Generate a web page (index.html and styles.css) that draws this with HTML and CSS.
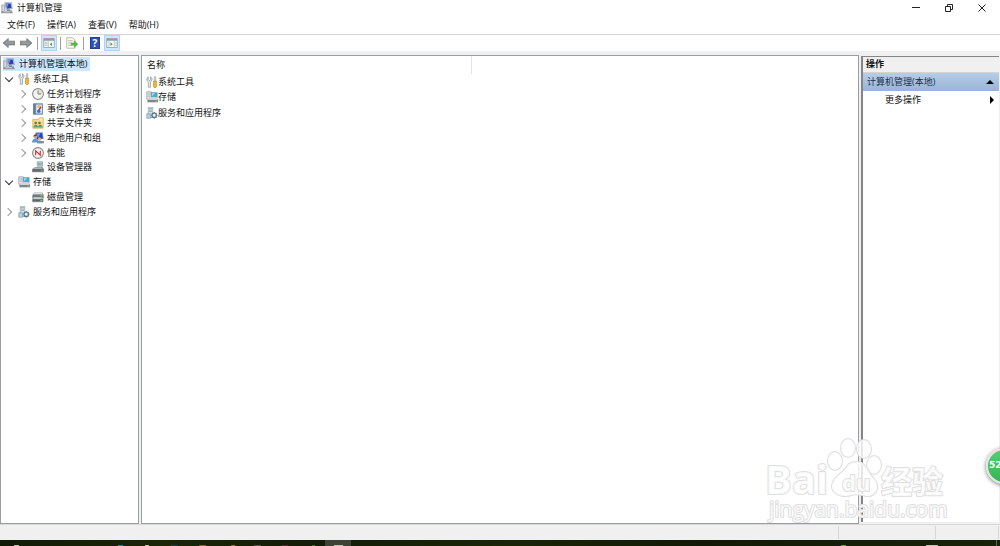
FILE: index.html
```
<!DOCTYPE html>
<html lang="zh-CN">
<head>
  <meta charset="UTF-8">
  <meta name="viewport" content="width=device-width, initial-scale=1.0">
  <title>计算机管理</title>
  <link rel="stylesheet" href="styles.css">
</head>
<body>
  <!-- 图标 -->
  <svg class="sprite" aria-hidden="true">
    <symbol id="computer" viewBox="0 0 16 16">
      <path d="M1 4h4v9H1z" fill="#d5d9dc" stroke="#7b858c" stroke-width=".8"/>
      <path d="M5 1h9l1 8-8 1z" fill="#e4e6ee" stroke="#77809a" stroke-width=".8"/>
      <path d="M6 2h7l1 6-6 1z" fill="#2743b8"/>
      <path d="M6 2l4 0-2 6z" fill="#7792e8"/>
      <path d="M8 10h4v2H8z" fill="#7d858c"/>
      <path d="M1 12l13-1 2 4H0z" fill="#8b959b"/>
      <path d="M3 13h9" stroke="#dfe4e6"/>
    </symbol>
    <symbol id="tools" viewBox="0 0 16 16">
      <path d="M3 1v4l1 1h1l1-1V1c2 1 3 4 .8 6L6 8v7H3V8C0 6 1 2 3 1z" fill="#e3e6e8" stroke="#8a9196" stroke-width=".9"/>
      <path d="M11 1h2v7h-2z" fill="#c9ced1" stroke="#8a9196" stroke-width=".6"/>
      <path d="M10 7h4v7l-1 1.500h-2L10 14z" fill="#edb92e" stroke="#b17d16" stroke-width=".7"/>
    </symbol>
    <symbol id="clock" viewBox="0 0 16 16">
      <circle cx="8" cy="8" r="7.200" fill="#f4f5f3" stroke="#868a8d" stroke-width="1.400"/>
      <path d="M8 8V2.500A5.500 5.500 0 0 1 13.500 8z" fill="#f3dfa9"/>
      <path d="M8 3v5h4" fill="none" stroke="#65727e" stroke-width="1.200"/>
      <circle cx="8" cy="8" r="5.500" fill="none" stroke="#d4d7d8" stroke-width=".6"/>
    </symbol>
    <symbol id="event" viewBox="0 0 16 16">
      <path d="M2 1h12v14H2z" fill="#a7c2dc" stroke="#58789b"/>
      <path d="M2 1h3v14H2z" fill="#627c98"/>
      <path d="M6 3h7v10H6z" fill="#e9eef4"/>
      <path d="M9 2l2.500 4h-5z" fill="#e6ba2f"/>
      <path d="M12 5l-3 5" stroke="#cf3434" stroke-width="2"/>
      <circle cx="9" cy="11" r="2.300" fill="#3c6dc5"/>
    </symbol>
    <symbol id="share" viewBox="0 0 16 16">
      <path d="M1 3h8l1-2h5v14H1z" fill="#f5d981" stroke="#c5a23e" stroke-width=".8"/>
      <path d="M10 2h4v3h-4z" fill="#fbf0c4"/>
      <circle cx="5" cy="8" r="1.700" fill="#6f7140"/>
      <circle cx="10" cy="8" r="1.700" fill="#6f7140"/>
      <path d="M2 14c0-5 6-5 6 0 0-5 6-5 6 0z" fill="#4f9e78"/>
    </symbol>
    <symbol id="users" viewBox="0 0 16 16">
      <path d="M5 1h9l1 8-9 1z" fill="#2945b8" stroke="#8e97bd"/>
      <path d="M6 2h5L8 8z" fill="#7994ed"/>
      <path d="M8 12h8v3H7z" fill="#8c9499"/>
      <circle cx="4.500" cy="6" r="2.500" fill="#d7a36c"/>
      <path d="M2 6c0-4 5-4 5-1z" fill="#6a4e2d"/>
      <path d="M0 14c0-7 9-7 9 0z" fill="#6297cb"/>
      <circle cx="10" cy="9" r="2" fill="#dfb178"/>
      <path d="M7 15c0-5 7-5 7 0z" fill="#7a8b9a"/>
    </symbol>
    <symbol id="performance" viewBox="0 0 16 16">
      <circle cx="8" cy="8" r="7.200" fill="#fff" stroke="#85888a" stroke-width="1.500"/>
      <circle cx="8" cy="8" r="5.500" fill="none" stroke="#d1a8a8" stroke-width=".6"/>
      <path d="M5 11V5l6 6V5" fill="none" stroke="#d22626" stroke-width="1.500"/>
    </symbol>
    <symbol id="device" viewBox="0 0 16 16">
      <path d="M7 1h7v6H7z" fill="#e3e8ea" stroke="#88949a"/>
      <path d="M8 2h5v4H8z" fill="#83aebd"/>
      <path d="M4 8h10l2 3v4H0v-4z" fill="#879197"/>
      <path d="M1 11h14v3H1z" fill="#5e686e"/>
      <path d="M4 9h9v1H3z" fill="#d8dddf"/>
      <path d="M12 12h2v1h-2z" fill="#83e35f"/>
    </symbol>
    <symbol id="storage" viewBox="0 0 16 16">
      <path d="M1 1h6v10H1z" fill="#e9eeef" stroke="#7e8a90" stroke-width=".8"/>
      <path d="M2 3h4M2 5h4M2 7h4" stroke="#8f9ba0" stroke-width=".8"/>
      <path d="M7 2h8v7H7z" fill="#45acd0" stroke="#79878d" stroke-width=".6"/>
      <path d="M8 3h4L8 7z" fill="#a5dced"/>
      <path d="M4 8h10l2 3v4H2v-4z" fill="#d0d6d8"/>
      <path d="M2 11h14v4H2z" fill="#7b868b"/>
      <path d="M3 11h12v1H3z" fill="#e3e7e8"/>
      <path d="M12 13h3v1h-3z" fill="#72e152"/>
    </symbol>
    <symbol id="disk" viewBox="0 0 16 16">
      <path d="M3 2h11l2 4v4H0V6z" fill="#aab2b5"/>
      <path d="M1 5h14v4H1z" fill="#70797e"/>
      <path d="M3 3h10v1H3z" fill="#eef1f1"/>
      <path d="M2 8h11l2 3v4H0v-4z" fill="#a7afb2"/>
      <path d="M1 11h14v3H1z" fill="#5b656a"/>
      <path d="M3 9h9v1H3z" fill="#edf0f0"/>
      <path d="M11 12h3v1h-3zM11 6h3v1h-3z" fill="#94dc81"/>
    </symbol>
    <symbol id="services" viewBox="0 0 16 16">
      <path d="M3 0h6v14H3z" fill="#d9e2e8" stroke="#7c929e" stroke-width=".8"/>
      <path d="M4 2h4M4 4h4M4 6h4" stroke="#89a3b3"/>
      <path d="M1 9h5v6H1z" fill="#b5cfdd" stroke="#7396a9" stroke-width=".8"/>
      <path d="M11 6.500v9M6.500 11h9M8 8l6 6M14 8l-6 6" stroke="#6d899a" stroke-width="1.600"/>
      <circle cx="11" cy="11" r="3" fill="#c2d5df" stroke="#55758a" stroke-width="1.500"/>
      <circle cx="11" cy="11" r="1.300" fill="#fff"/>
    </symbol>
    <symbol id="back" viewBox="0 0 16 16">
      <path d="M0 8l7-6v3.500h9v5H7V14z" fill="#8d9092" stroke="#77797b"/>
      <path d="M4 8h10" stroke="#a9abac"/>
    </symbol>
    <symbol id="forward" viewBox="0 0 16 16">
      <path d="M16 8L9 2v3.500H0v5h9V14z" fill="#8d9092" stroke="#77797b"/>
      <path d="M2 8h10" stroke="#a9abac"/>
    </symbol>
    <symbol id="tree-pane" viewBox="0 0 16 16">
      <path d="M1 2h14v12H1z" fill="#f8fafb" stroke="#8a989f"/>
      <path d="M1 2h14v3H1z" fill="#909da5"/>
      <path d="M7 5v9M2 7h4M2 9h4M2 11h4" stroke="#a8b3b9"/>
      <path d="M12 7v5L9 9.500z" fill="#3aac3a"/>
    </symbol>
    <symbol id="action-pane" viewBox="0 0 16 16">
      <path d="M1 2h14v12H1z" fill="#f8fafb" stroke="#8a989f"/>
      <path d="M1 2h14v3H1z" fill="#909da5"/>
      <path d="M4 5v9M11 5v9M12 8h3M12 11h3" stroke="#a8b3b9"/>
      <path d="M6 7v5l3-2.500z" fill="#3aac3a"/>
    </symbol>
    <symbol id="export" viewBox="0 0 16 16">
      <path d="M1 1h8l3 3v11H1z" fill="#fdfbeb" stroke="#b1aa8d"/>
      <path d="M3 5h6M3 8h5M3 11h5" stroke="#9b9c91"/>
      <path d="M7 8h4V5l5 4.500-5 4.500v-3H7z" fill="#55bd47" stroke="#459d3c" stroke-width=".5"/>
    </symbol>
  </svg>

  <div class="window">
    <header class="titlebar">
      <svg class="icon"><use href="#computer"/></svg>
      <h1>计算机管理</h1>
      <div class="window-buttons">
        <button aria-label="最小化"><svg viewBox="0 0 8 8"><path d="M0 3.500h8"/></svg></button>
        <button aria-label="还原"><svg viewBox="0 0 8 8"><path d="M.5 2.500h5v5h-5zM2.500 2.500v-2h5v5h-2"/></svg></button>
        <button aria-label="关闭"><svg viewBox="0 0 8 8"><path d="M.5.5l7 7M7.500.5l-7 7"/></svg></button>
      </div>
    </header>

    <nav class="menubar">
      <button>文件(F)</button>
      <button>操作(A)</button>
      <button>查看(V)</button>
      <button>帮助(H)</button>
    </nav>

    <div class="toolbar">
      <button aria-label="后退"><svg class="icon"><use href="#back"/></svg></button>
      <button aria-label="前进"><svg class="icon"><use href="#forward"/></svg></button>
      <span class="separator"></span>
      <button class="active" aria-label="显示控制台树"><svg class="icon"><use href="#tree-pane"/></svg></button>
      <span class="separator"></span>
      <button aria-label="导出列表"><svg class="icon"><use href="#export"/></svg></button>
      <span class="separator"></span>
      <button aria-label="帮助"><span class="help">?</span></button>
      <button class="active" aria-label="显示操作窗格"><svg class="icon"><use href="#action-pane"/></svg></button>
    </div>

    <main class="workspace">
      <nav class="tree">
        <ul>
          <li><span class="selected"><svg class="icon"><use href="#computer"/></svg>计算机管理(本地)</span></li>
          <li class="group"><i class="arrow open"></i><svg class="icon"><use href="#tools"/></svg>系统工具</li>
          <li class="leaf"><i class="arrow"></i><svg class="icon"><use href="#clock"/></svg>任务计划程序</li>
          <li class="leaf"><i class="arrow"></i><svg class="icon"><use href="#event"/></svg>事件查看器</li>
          <li class="leaf"><i class="arrow"></i><svg class="icon"><use href="#share"/></svg>共享文件夹</li>
          <li class="leaf"><i class="arrow"></i><svg class="icon"><use href="#users"/></svg>本地用户和组</li>
          <li class="leaf"><i class="arrow"></i><svg class="icon"><use href="#performance"/></svg>性能</li>
          <li class="leaf"><i class="arrow none"></i><svg class="icon"><use href="#device"/></svg>设备管理器</li>
          <li class="group"><i class="arrow open"></i><svg class="icon"><use href="#storage"/></svg>存储</li>
          <li class="leaf"><i class="arrow none"></i><svg class="icon"><use href="#disk"/></svg>磁盘管理</li>
          <li class="group"><i class="arrow"></i><svg class="icon"><use href="#services"/></svg>服务和应用程序</li>
        </ul>
      </nav>

      <section class="content">
        <div class="column-head">名称</div>
        <ul class="items">
          <li><svg class="icon"><use href="#tools"/></svg>系统工具</li>
          <li><svg class="icon"><use href="#storage"/></svg>存储</li>
          <li><svg class="icon"><use href="#services"/></svg>服务和应用程序</li>
        </ul>
      </section>

      <aside class="actions">
        <h2>操作</h2>
        <button class="action-title">计算机管理(本地)<i class="up"></i></button>
        <button class="action-more">更多操作<i class="right"></i></button>
      </aside>
    </main>

    <footer class="statusbar">
      <span></span>
      <span class="wide"></span>
      <span class="mid"></span>
    </footer>

    <!-- 任务栏顶部 -->
    <div class="taskbar">
      <svg width="360" height="6">
        <path d="M325 0h26v6h-26z" fill="#3c4335"/>
        <path d="M14 5h5v1h-5zM145 5h4v1h-4zM334 5h9v1h-9z" fill="#bfc4b6"/>
        <path d="M118 5h5v1h-5z" fill="#2681bd"/>
        <path d="M171 5h7v1h-7z" fill="#154450"/>
        <path d="M199 5h7v1h-7z" fill="#bd4a1c"/>
        <path d="M231 5h4v1h-4z" fill="#967245"/>
        <path d="M254 5h7v1h-7z" fill="#55594f"/>
        <path d="M282 5h6v1h-6z" fill="#592936"/>
        <path d="M312 5h3v1h-3z" fill="#3a7224"/>
      </svg>
      <svg width="160" height="6">
        <path d="M1 5h5v1H1z" fill="#7c9f20"/>
        <path d="M86 5h12v1H86z" fill="#bfc4b6"/>
        <path d="M156 0h1v6h-1z" fill="#5d6258"/>
      </svg>
    </div>
  </div>

  <svg class="watermark" viewBox="0 0 190 90">
    <text class="brand" x="5" y="59">Bai</text>
    <ellipse cx="75" cy="26" rx="7" ry="9"/>
    <ellipse cx="88" cy="13" rx="7" ry="9"/>
    <ellipse cx="104" cy="14" rx="7" ry="9"/>
    <ellipse cx="114" cy="30" rx="7" ry="9"/>
    <path d="M97 27c9 0 11 11 17 17 8 10 0 18-8 17-6-2-13-2-18 0-10 1-19-5-15-14 4-8 12-10 15-17q3-3 9-3z"/>
    <text class="du" x="82" y="56">du</text>
    <text class="cn" x="121" y="58">经验</text>
    <text class="site" x="9" y="82">jingyan.baidu.com</text>
  </svg>
  <div class="badge">52</div>
</body>
</html>
```
FILE: styles.css
```
* {
  box-sizing: border-box;
}
body {
  margin: 0;
  position: relative;
  overflow: hidden;
  font-family: "Open Sans", "Noto Sans CJK SC", sans-serif;
  font-size: 9px;
  line-height: 14px;
  color: #111;
  background: #fff;
}
button {
  font: inherit;
  color: inherit;
  border: 0;
  padding: 0;
  background: none;
}
ul {
  list-style: none;
  margin: 0;
  padding: 0;
}
.sprite {
  display: none;
}
.icon {
  width: 12px;
  height: 12px;
  flex: none;
}
.window {
  height: 100vh;
  display: flex;
  flex-direction: column;
}

/* title, menu, toolbar */
.titlebar {
  height: 16px;
  display: flex;
  align-items: center;
  gap: 4px;
  padding-left: 1px;
}
.titlebar h1 {
  margin: 0;
  font-size: 9px;
  font-weight: normal;
}
.window-buttons {
  margin-left: auto;
  display: flex;
  padding-right: 2px;
}
.window-buttons button {
  width: 33px;
  height: 14px;
  display: flex;
  align-items: center;
  justify-content: center;
}
.window-buttons svg {
  width: 8px;
  height: 8px;
  fill: none;
  stroke: #222;
}
.menubar {
  height: 19px;
  display: flex;
  align-items: center;
  gap: 12px;
  padding-left: 7px;
  border-bottom: 1px solid #d7d7d7;
}
.toolbar {
  height: 16px;
  display: flex;
  align-items: center;
  gap: 1px;
  padding-left: 1px;
}
.toolbar button {
  width: 16px;
  height: 16px;
  display: flex;
  align-items: center;
  justify-content: center;
}
.toolbar .active {
  background: #cce8ff;
  border: 1px solid #a9d7f8;
}
.separator {
  width: 1px;
  height: 13px;
  margin: 0 2px;
  background: #a0a0a0;
}
.help {
  width: 10px;
  height: 12px;
  line-height: 10px;
  font-size: 10px;
  font-weight: bold;
  color: #fff;
  background: #2d51b5;
  border: 1px solid #203f91;
}

/* panes */
.workspace {
  flex: 1;
  min-height: 0;
  display: flex;
  gap: 2px;
  padding: 4px 1px 0 0;
  background: #f0f0f0;
}
.tree,
.content {
  background: #fff;
  border: 1px solid #9a9da3;
}
.tree {
  width: 139px;
  padding: 1px 0 0 2px;
}
.tree ul {
  height: 162px;
  display: grid;
  grid-template-rows: repeat(11, 1fr);
}
.tree li {
  display: flex;
  align-items: center;
  gap: 3px;
  min-height: 0;
}
.tree .group {
  padding-left: 2px;
}
.tree .leaf {
  padding-left: 16px;
}
.selected {
  display: flex;
  align-items: center;
  gap: 4px;
  height: 14px;
  padding-right: 3px;
  background: #cce8ff;
}
.arrow {
  width: 8px;
  height: 8px;
  display: flex;
  align-items: center;
  justify-content: center;
  margin-right: 2px;
}
.arrow::before {
  content: "";
  width: 5px;
  height: 5px;
  margin-left: -3px;
  border: solid #999;
  border-width: 1px 1px 0 0;
  transform: rotate(45deg);
}
.arrow.open::before {
  margin: -3px 0 0;
  border-color: #333;
  transform: rotate(135deg);
}
.arrow.none::before {
  display: none;
}
.content {
  flex: 1;
}
.column-head {
  width: 330px;
  height: 18px;
  padding: 2px 5px;
  border-right: 1px solid #e3e3e3;
}
.items {
  height: 47px;
  display: grid;
  grid-template-rows: repeat(3, 1fr);
  padding-left: 4px;
}
.items li {
  display: flex;
  align-items: center;
  min-height: 0;
}
.actions {
  width: 138px;
  display: flex;
  flex-direction: column;
  margin: 1px 0 2px;
  background: #fff;
  border-top: 1px solid #858585;
  border-left: 2px solid #858585;
}
.actions h2 {
  margin: 0;
  height: 16px;
  padding-left: 3px;
  font-size: 9px;
  background: #f0f0f0;
  border-bottom: 1px solid #d4d4d4;
}
.actions button {
  height: 18px;
  display: flex;
  align-items: center;
  justify-content: space-between;
  padding: 0 5px 0 4px;
}
.actions .action-title {
  background: linear-gradient(#b6cde7, #98b4d6);
  color: #1c2f49;
}
.actions .action-more {
  padding-left: 22px;
}
.up {
  border: 4px solid transparent;
  border-top: 0;
  border-bottom-color: #000;
}
.right {
  border: 4px solid transparent;
  border-right: 0;
  border-left-color: #000;
}

.statusbar {
  height: 16px;
  display: flex;
  background: #f0f0f0;
  border-top: 1px solid #d8d8d8;
  padding: 1px 1px 1px 0;
}
.statusbar span {
  flex: 1;
  border-right: 1px solid #d5d5d5;
}
.statusbar .wide {
  flex: none;
  width: 97px;
}
.statusbar .mid {
  flex: none;
  width: 63px;
}
.taskbar {
  height: 6px;
  display: flex;
  justify-content: space-between;
  background: linear-gradient(90deg, #101906, #1b2604 16%, #111b08 32%, #1a2505 50%, #111906 70%, #182207);
}

/* overlays */
.watermark {
  position: absolute;
  right: 50px;
  bottom: 21px;
  width: 190px;
  height: 90px;
  fill: #fff;
  fill-opacity: 0.8;
  stroke: #e0e0e0;
  stroke-width: 2px;
  stroke-linejoin: round;
  paint-order: stroke;
  pointer-events: none;
}
.brand {
  font: bold 40px "Open Sans", sans-serif;
}
.du {
  font: bold 22px "Open Sans", sans-serif;
}
.cn {
  font: bold 31px "Noto Sans CJK SC", sans-serif;
}
.site {
  font: 21px "Open Sans", sans-serif;
}
.badge {
  position: absolute;
  right: -22px;
  top: 448px;
  width: 36px;
  height: 36px;
  padding-left: 1px;
  font: bold 9px/30px "DejaVu Sans", sans-serif;
  color: #fff;
  background: linear-gradient(#55cf72, #35b553);
  border: 2px solid #e4e4e4;
  border-radius: 50%;
  box-shadow: 0 1px 4px #777;
}
```
